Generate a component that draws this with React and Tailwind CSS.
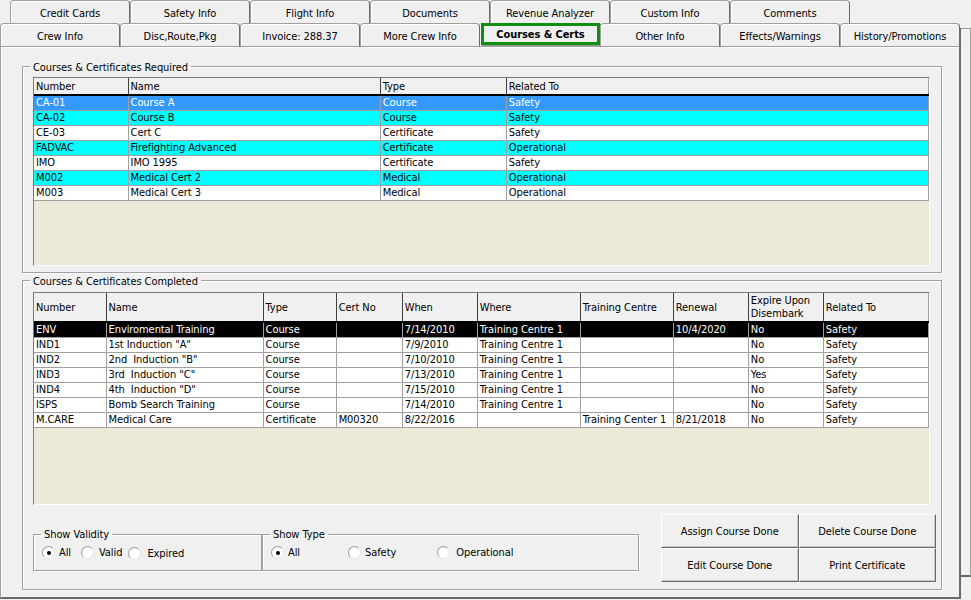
const row1 = ["Credit Cards", "Safety Info", "Flight Info", "Documents", "Revenue Analyzer", "Custom Info", "Comments"];
const row2 = ["Crew Info", "Disc,Route,Pkg", "Invoice: 288.37", "More Crew Info", "Courses & Certs", "Other Info", "Effects/Warnings", "History/Promotions"];

const reqCols = [94, 252, 126, 422];
const reqHead = ["Number", "Name", "Type", "Related To"];
const reqRows = [
  ["CA-01", "Course A", "Course", "Safety", "sel"],
  ["CA-02", "Course B", "Course", "Safety", "cyan"],
  ["CE-03", "Cert C", "Certificate", "Safety", ""],
  ["FADVAC", "Firefighting Advanced", "Certificate", "Operational", "cyan"],
  ["IMO", "IMO 1995", "Certificate", "Safety", ""],
  ["M002", "Medical Cert 2", "Medical", "Operational", "cyan"],
  ["M003", "Medical Cert 3", "Medical", "Operational", ""],
];

const doneCols = [72, 157, 73, 66, 75, 103, 93, 75, 75, 105];
const doneHead = ["Number", "Name", "Type", "Cert No", "When", "Where", "Training Centre", "Renewal", "Expire Upon Disembark", "Related To"];
const doneRows = [
  ["ENV", "Enviromental Training", "Course", "", "7/14/2010", "Training Centre 1", "", "10/4/2020", "No", "Safety", "black"],
  ["IND1", '1st Induction "A"', "Course", "", "7/9/2010", "Training Centre 1", "", "", "No", "Safety", ""],
  ["IND2", '2nd  Induction "B"', "Course", "", "7/10/2010", "Training Centre 1", "", "", "No", "Safety", ""],
  ["IND3", '3rd  Induction "C"', "Course", "", "7/13/2010", "Training Centre 1", "", "", "Yes", "Safety", ""],
  ["IND4", '4th  Induction "D"', "Course", "", "7/15/2010", "Training Centre 1", "", "", "No", "Safety", ""],
  ["ISPS", "Bomb Search Training", "Course", "", "7/14/2010", "Training Centre 1", "", "", "No", "Safety", ""],
  ["M.CARE", "Medical Care", "Certificate", "M00320", "8/22/2016", "", "Training Center 1", "8/21/2018", "No", "Safety", ""],
];

const rowStyle = {
  sel: "bg-[#3399ff] text-white",
  cyan: "bg-[#00ffff] text-black",
  black: "bg-black text-white",
  "": "bg-white text-black",
};

function Tab({ label, active }) {
  if (active) {
    return (
      <div className="w-[119px] h-[22px] ml-[1px] mb-[1px] flex items-center justify-center font-bold text-black border-[3px] border-[#0f8f0f] bg-[#f0f0f0] shadow-[1px_1px_1px_#9a9a9a]">
        {label}
      </div>
    );
  }
  return (
    <div className="w-[120px] h-[23px] pt-[2px] flex items-center justify-center text-black rounded-t-[4px] border-t border-l border-r border-[#a0a0a0] border-r-[#696969] bg-[#f0f0f0] shadow-[inset_1px_1px_0_#ffffff]">
      {label}
    </div>
  );
}

function Grid({ cols, head, rows, height, headH }) {
  return (
    <div className={`${height} bg-[#ece9d8] border border-[#7a7a7a] border-r-white border-b-white overflow-hidden`}>
      <table className="table-fixed border-collapse w-[895px]">
        <colgroup>
          {cols.map((w, i) => (
            <col key={i} style={{ width: w }} />
          ))}
        </colgroup>
        <thead>
          <tr className="bg-[#f0f0f0]">
            {head.map((h, i) => (
              <th key={i} className={`${headH} p-0 pl-[2px] font-normal text-left leading-[13px] border-r border-r-[#404040] last:border-r-[#a0a0a0] border-b-2 border-b-black`}>
                <div className="pr-[6px]">{h}</div>
              </th>
            ))}
          </tr>
        </thead>
        <tbody>
          {rows.map((r, i) => {
            const kind = r[r.length - 1];
            return (
              <tr key={i} className={rowStyle[kind]}>
                {r.slice(0, -1).map((c, j) => (
                  <td key={j} className="h-[15px] p-0 pl-[2px] leading-[13px] whitespace-pre border-r border-b border-[#a0a0a0] overflow-hidden">
                    {c}
                  </td>
                ))}
              </tr>
            );
          })}
        </tbody>
      </table>
    </div>
  );
}

function Radio({ on, label, ml, gap, dy }) {
  return (
    <div className={`flex items-center ${ml} ${dy}`}>
      <span className="w-[13px] h-[13px] rounded-full border border-[#9c9c9c] border-r-[#e4e4e4] border-b-[#e4e4e4] bg-white flex items-center justify-center shrink-0">
        {on && <span className="w-[4px] h-[4px] rounded-full bg-black" />}
      </span>
      <span className={gap}>{label}</span>
    </div>
  );
}

function GroupBox({ title, className, legendClass, children }) {
  return (
    <fieldset className={`border border-[#a0a0a0] shadow-[inset_1px_1px_0_#ffffff,1px_1px_0_#ffffff] ${className}`}>
      <legend className={`px-[3px] h-[13px] text-black ${legendClass}`}>{title}</legend>
      {children}
    </fieldset>
  );
}

function CmdButton({ label }) {
  return (
    <button className="flex items-center justify-center bg-[#f0f0f0] text-black border border-white border-r-[#696969] border-b-[#696969] shadow-[inset_-1px_-1px_0_#c8c8c8]">
      {label}
    </button>
  );
}

export default function App() {
  return (
    <div className="w-[971px] h-[600px] overflow-hidden flex bg-[#f0f0f0] text-[11px] leading-[13px] tracking-[-0.08px] text-black font-['DejaVu_Sans_Condensed','DejaVu_Sans',sans-serif]">
      <div className="w-[961px] shrink-0 flex flex-col">
        <div className="flex pl-[10px]">
          {row1.map((t) => (
            <Tab key={t} label={t} />
          ))}
        </div>
        <div className="flex">
          {row2.map((t) => (
            <Tab key={t} label={t} active={t === "Courses & Certs"} />
          ))}
          <div className="w-[1px] h-[18px] mt-[5px] bg-[#696969]" />
        </div>
        <div className="h-[553px] border border-[#a0a0a0] border-r-2 border-b-2 border-r-[#696969] border-b-[#696969] shadow-[inset_1px_1px_0_#ffffff] pl-[21px] pt-[13px]">
          <div className="w-[919px] flex flex-col gap-[1px]">
            <GroupBox title="Courses & Certificates Required" legendClass="-ml-[3px] leading-[15px]" className="h-[213px] pl-[10px] pr-[11px] pt-[4px]">
              <Grid cols={reqCols} head={reqHead} rows={reqRows} height="h-[189px]" headH="h-[17px] pt-[1px]" />
            </GroupBox>
            <GroupBox title="Courses & Certificates Completed" legendClass="-ml-[3px] leading-[15px]" className="h-[316px] pl-[10px] pr-[11px] pt-[5px]">
              <Grid cols={doneCols} head={doneHead} rows={doneRows} height="h-[213px]" headH="h-[29px]" />
              <div className="flex items-start mt-[9px] mr-[-6px]">
                <div className="flex mt-[14px]">
                  <GroupBox title="Show Validity" legendClass="ml-[7px] leading-[13px]" className="w-[229px] h-[43px]">
                    <div className="flex items-start mt-[5px] pl-[8px]">
                      <Radio on label="All" gap="ml-[4px]" />
                      <Radio label="Valid" ml="ml-[10px]" gap="ml-[5px]" />
                      <Radio label="Expired" ml="ml-[6px]" gap="ml-[6px]" dy="mt-[1px]" />
                    </div>
                  </GroupBox>
                  <GroupBox title="Show Type" legendClass="ml-[7px] leading-[13px]" className="w-[377px] h-[43px]">
                    <div className="flex items-start mt-[5px] pl-[8px]">
                      <Radio on label="All" gap="ml-[4px]" />
                      <Radio label="Safety" ml="ml-[48px]" gap="ml-[4px]" />
                      <Radio label="Operational" ml="ml-[41px]" gap="ml-[6px]" />
                    </div>
                  </GroupBox>
                </div>
                <div className="ml-[22px] w-[275px] h-[68px] grid grid-cols-2 grid-rows-2">
                  <CmdButton label="Assign Course Done" />
                  <CmdButton label="Delete Course Done" />
                  <CmdButton label="Edit Course Done" />
                  <CmdButton label="Print Certificate" />
                </div>
              </div>
            </GroupBox>
          </div>
        </div>
      </div>
      <div className="grow mt-[28px] h-[549px] border-t border-r border-b-2 border-t-[#a0a0a0] border-r-[#a0a0a0] border-b-[#696969]" />
    </div>
  );
}
